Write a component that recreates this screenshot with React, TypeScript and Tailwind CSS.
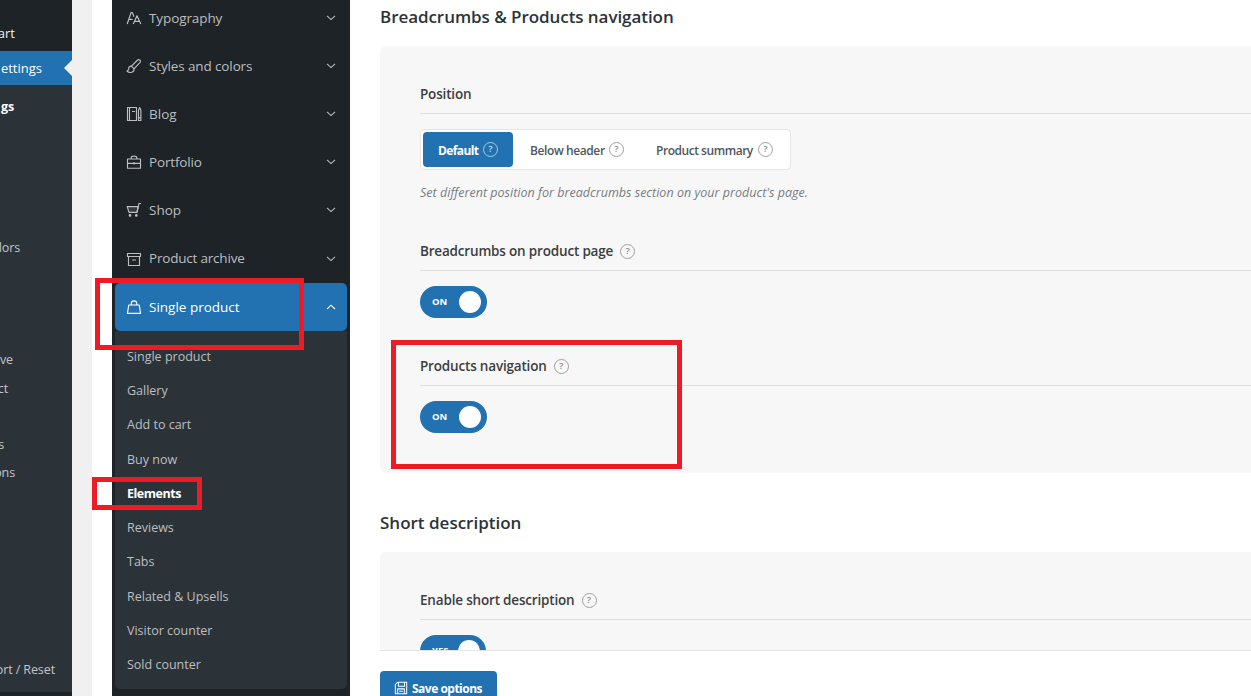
import type { ReactNode } from "react";

const adminRows = ["gs", "", "", "", "", "lors", "", "", "", "ve", "ct", "", "s", "ons", "", "", "", "", "", "", "ort / Reset"];
const adminEnds = ["w-[14px]", "", "", "", "", "w-[20px]", "", "", "", "w-[13px]", "w-[8px]", "", "w-[4px]", "w-[15px]", "", "", "", "", "", "", "w-[55px]"];

function Glyph({ children, className = "size-4" }: { children: ReactNode; className?: string }) {
  return (
    <svg viewBox="0 0 16 16" fill="none" stroke="currentColor" strokeWidth="1.15" strokeLinejoin="round" className={`shrink-0 ${className}`}>
      {children}
    </svg>
  );
}

const sections = [
  {
    label: "Typography",
    track: "tracking-[-0.1px]",
    icon: <path d="M1.2 14 L5.1 2.5 H6.3 L8 6.7 M2.9 9.3 H6.5 M7.3 14 L11 5.7 L14.8 14 M8.5 11.3 H13.5" />,
  },
  {
    label: "Styles and colors",
    track: "tracking-[-0.13px]",
    icon: <path d="M5.5 8.2 L11.6 2 C13 .8 15.4 2.6 14.1 4.3 L8 10.8 M5.5 8.2 L8 10.8 M5.5 8.2 C3.6 7.9 2.7 9.2 2.7 10.7 C2.6 12 1.9 12.6 1 13.2 C3.6 15.5 8.5 14.6 8 10.8" />,
  },
  {
    label: "Blog",
    track: "tracking-[0px]",
    icon: <path d="M1.5 1.5 H10.5 V14.5 H1.5 Z M3.5 1.5 V14.5 M6 5.5 H9 M12.5 4.3 L13.7 1.5 L14.9 4.3 V14.5 H12.5 Z M12.5 11.8 H14.9" />,
  },
  {
    label: "Portfolio",
    track: "tracking-[-0.15px]",
    icon: <path d="M1.5 5 H14.5 V14.2 H1.5 Z M5.2 5 V3.7 C5.2 1.6 10.8 1.6 10.8 3.7 V5 M1.5 9.3 H14.5 M8 8 V10.6" />,
  },
  {
    label: "Shop",
    track: "tracking-[0px]",
    icon: (
      <>
        <path d="M1.2 4.6 H12.2 L11 10.4 H3 Z" fill="currentColor" fillOpacity=".15" />
        <path d="M11 10.4 L12.9 1.5 H15" />
        <circle cx="4" cy="13.4" r=".8" fill="currentColor" />
        <circle cx="10.3" cy="13.4" r=".8" fill="currentColor" />
      </>
    ),
  },
  {
    label: "Product archive",
    track: "tracking-[-0.2px]",
    icon: <path d="M1.5 2.5 H14.5 V5.5 H1.5 Z M2.5 5.5 V14.5 H13.5 V5.5 M6 9 H10" />,
  },
];

const subItems = ["Single product", "Gallery", "Add to cart", "Buy now", "Elements", "Reviews", "Tabs", "Related & Upsells", "Visitor counter", "Sold counter"];

function Chevron({ up = false }: { up?: boolean }) {
  return (
    <svg viewBox="0 0 10 6" fill="none" stroke="currentColor" strokeWidth="1.1" className="h-[6px] w-[10px] shrink-0">
      <path d={up ? "M1 5 L5 1.2 L9 5" : "M1 .8 L5 4.6 L9 .8"} />
    </svg>
  );
}

function Help({ light = false }: { light?: boolean }) {
  return (
    <span className={`-mt-px flex size-[15px] shrink-0 items-center justify-center rounded-full border text-[9.5px] leading-none font-semibold tracking-normal ${light ? "border-[#a9cae3] text-[#c5dced]" : "border-[#a0a0a0] text-[#8f8f8f]"}`}>
      ?
    </span>
  );
}

function Heading({ text, help = true }: { text: string; help?: boolean }) {
  return (
    <div className="flex h-[38px] items-center gap-[7px] border-b border-[#dfdfdf] text-[13.5px] font-semibold tracking-[-0.18px] text-[#3c3e40]">
      <span className="whitespace-nowrap">{text}</span>
      {help && <Help />}
    </div>
  );
}

function Toggle({ text, width = "w-[67px]" }: { text: string; width?: string }) {
  return (
    <div className={`mt-[15px] flex h-8 items-center justify-between rounded-full bg-[#2271b1] pr-[6px] pl-3 text-[9.5px] font-bold text-white ${width}`}>
      <span>{text}</span>
      <span className="size-[22px] rounded-full bg-white" />
    </div>
  );
}

export default function App() {
  return (
    <div className="relative flex h-[696px] w-[1251px] overflow-hidden bg-white font-['Open_Sans','Noto_Sans',sans-serif] text-[13px]">
      <nav className="flex w-[72px] shrink-0 flex-col overflow-hidden bg-[#1d2327] text-[#f0f0f1]">
        <div className="flex h-[51px] shrink-0 items-center pt-[17px]">
          <span className="flex w-[15px] justify-end whitespace-nowrap">art</span>
        </div>
        <div className="flex h-[34px] shrink-0 items-center justify-between bg-[#2271b1] text-white">
          <span className="flex w-[42px] justify-end pt-px whitespace-nowrap">ettings</span>
          <svg viewBox="0 0 8 16" className="h-4 w-2 fill-[#f0f0f1]">
            <path d="M8 0 L0 8 L8 16 Z" />
          </svg>
        </div>
        <div className="h-[607px] shrink-0 bg-[#2c3338] pt-2 text-[12.5px] text-[#c3c4c7]">
          {adminRows.map((t, i) => (
            <div key={i} className="flex h-[28.2px] items-center">
              <span className={`flex shrink-0 justify-end tracking-[-0.1px] whitespace-nowrap ${adminEnds[i]} ${i === 0 ? "font-bold text-white" : ""}`}>{t}</span>
            </div>
          ))}
        </div>
      </nav>
      <div className="w-5 shrink-0 bg-[#f0f0f1]" />
      <div className="w-5 shrink-0 bg-white" />
      <aside className="flex w-[238px] shrink-0 flex-col bg-[#1d2327] px-[3px] text-[13.5px] text-[#bcbec0]">
        <div className="-mt-[6px] h-[289px] shrink-0">
          {sections.map((s) => (
            <div key={s.label} className="flex h-[48.1px] items-center pr-[11px] pl-[11px]">
              <Glyph>{s.icon}</Glyph>
              <span className={`ml-[7px] flex-1 whitespace-nowrap ${s.track}`}>{s.label}</span>
              <Chevron />
            </div>
          ))}
        </div>
        <div className="flex h-12 shrink-0 items-center rounded-[5px] bg-[#2271b1] px-[11px] text-white">
          <Glyph>
            <path d="M2.8 6 H13.2 L14.6 14.3 H1.4 Z M5.3 6 V4.2 C5.3 1 10.7 1 10.7 4.2 V6" />
          </Glyph>
          <span className="ml-[7px] flex-1 whitespace-nowrap">Single product</span>
          <Chevron up />
        </div>
        <ul className="h-[358px] shrink-0 rounded-b-[5px] bg-[#2c3338] pt-[9px] pl-3 text-[12.5px]">
          {subItems.map((t) => (
            <li key={t} className={`flex h-[34.25px] items-center whitespace-nowrap ${t === "Elements" ? "font-bold tracking-[-0.48px] text-white" : ""}`}>
              {t}
            </li>
          ))}
        </ul>
      </aside>
      <main className="flex min-w-0 flex-1 flex-col pl-[30px]">
        <div className="h-[650px] shrink-0 overflow-hidden">
          <h2 className="flex h-[46px] items-start pt-1 text-[17px] leading-[26px] font-semibold tracking-[-0.06px] text-[#2c3338]">Breadcrumbs &amp; Products navigation</h2>
          <section className="h-[427px] rounded-l-[6px] bg-[#f7f7f7] pt-[30px] pl-10">
            <Heading text="Position" help={false} />
            <div className="mt-[15px] flex h-[41px] w-[371px] items-center rounded-[4px] border border-[#e6e6e7] bg-white p-[2px] text-[12px] font-semibold text-[#50575e]">
              <div className="flex h-[35px] w-[90px] items-center gap-[5px] rounded-[4px] bg-[#2271b1] pl-[15px] text-white">
                <span className="w-10 pt-0.5 font-bold tracking-[-0.62px]">Default</span>
                <Help light />
              </div>
              <div className="flex items-center gap-[5px] pl-[17px]">
                <span className="w-[74px] pt-0.5 tracking-[-0.4px] whitespace-nowrap">Below header</span>
                <Help />
              </div>
              <div className="flex items-center gap-[5px] pl-8">
                <span className="w-[97px] pt-0.5 tracking-[-0.46px] whitespace-nowrap">Product summary</span>
                <Help />
              </div>
            </div>
            <p className="mt-[13px] h-5 text-[12.5px] leading-5 tracking-[0.02px] text-[#787c82] italic">Set different position for breadcrumbs section on your product's page.</p>
            <div className="mt-[30px]">
              <Heading text="Breadcrumbs on product page" />
              <Toggle text="ON" />
            </div>
            <div className="mt-[30px]">
              <Heading text="Products navigation" />
              <Toggle text="ON" />
            </div>
          </section>
          <h2 className="flex h-[79px] items-center pt-5 text-[17px] font-semibold text-[#2c3338]">Short description</h2>
          <section className="h-[200px] rounded-l-[6px] bg-[#f7f7f7] pt-[30px] pl-10">
            <Heading text="Enable short description" />
            <Toggle text="YES" width="w-[66px]" />
          </section>
        </div>
        <footer className="h-[46px] shrink-0 border-t border-[#e5e5e5] bg-white pt-5">
          <button className="flex h-9 w-[117px] items-center gap-1 rounded-[4px] bg-[#2271b1] pl-[14px] text-[12px] font-bold tracking-[-0.5px] whitespace-nowrap text-white">
            <Glyph className="-mt-0.5 size-[14px]">
              <path d="M4 1.5 H14.5 V14.5 H1.5 V4 Z M5 1.5 V6 H12 V1.5 M4.2 14.5 V9 H11.8 V14.5 M6 11.7 H10" />
            </Glyph>
            Save options
          </button>
        </footer>
      </main>
      <div className="pointer-events-none absolute top-[278px] left-[95px] h-[72px] w-[209px] border-[5px] border-[#ed1c24]" />
      <div className="pointer-events-none absolute top-[477px] left-[92px] h-[33px] w-[110px] border-[5px] border-[#ed1c24]" />
      <div className="pointer-events-none absolute top-[340px] left-[391px] h-[129px] w-[291px] border-[5px] border-[#ed1c24]" />
    </div>
  );
}
